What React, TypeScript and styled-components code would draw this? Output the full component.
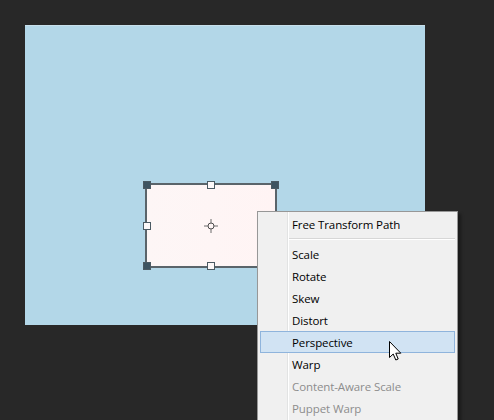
import React, { FC } from "react";
import styled, { createGlobalStyle } from "styled-components";

const GlobalStyle = createGlobalStyle`
  html, body {
    margin: 0;
    padding: 0;
    background: #282828;
  }
  body {
    width: 494px;
    height: 420px;
    overflow: hidden;
    font-family: "Open Sans", "Noto Sans", sans-serif;
  }
`;

const StyledWorkspace = styled.div`
  position: relative;
  display: flex;
  align-items: flex-start;
  width: 494px;
  height: 420px;
  padding: 25px 0 0 25px;
  box-sizing: border-box;
  background: #282828;
`;

const StyledCanvas = styled.div`
  position: relative;
  width: 400px;
  height: 300px;
  background: #b3d7e8;
  border-top: 1px solid #c8e0eb;
  box-sizing: border-box;
`;

const StyledShape = styled.div`
  position: absolute;
  left: 120px;
  top: 157px;
  width: 132px;
  height: 85px;
  box-sizing: border-box;
  border: 2px solid #5a646a;
  background: linear-gradient(90deg, #fdf6f6, #fff4f4);
`;

const StyledHandle = styled.span<{ $x: number; $y: number; $filled?: boolean }>`
  position: absolute;
  left: ${({ $x }) => $x}%;
  top: ${({ $y }) => $y}%;
  width: 8px;
  height: 8px;
  margin: -4px 0 0 -4px;
  box-sizing: border-box;
  border: 1px solid #4b5a63;
  background: ${({ $filled }) => ($filled ? "#3e5461" : "#fdf8f8")};
`;

const StyledCenter = styled.svg`
  position: absolute;
  left: 50%;
  top: 50%;
  margin: -8px 0 0 -8px;
`;

const StyledMenu = styled.ul`
  position: absolute;
  left: 257px;
  top: 211px;
  display: flex;
  flex-direction: column;
  width: 201px;
  height: 220px;
  margin: 0;
  padding: 1px 2px 0 2px;
  list-style: none;
  box-sizing: border-box;
  background: #f0f0f0;
  border: 1px solid #979797;
  box-shadow: 3px 3px 3px rgba(0, 0, 0, 0.35);

  &::before {
    content: "";
    position: absolute;
    left: 29px;
    top: 0;
    bottom: 0;
    width: 1px;
    background: #e2e3e3;
    border-right: 1px solid #ffffff;
  }
`;

const StyledItem = styled.li<{ $active?: boolean; $disabled?: boolean }>`
  position: relative;
  display: flex;
  align-items: center;
  flex: 0 0 22px;
  padding-left: 31px;
  box-sizing: border-box;
  font-size: 11.5px;
  letter-spacing: -0.1px;
  color: ${({ $disabled }) => ($disabled ? "#8d8d8d" : "#000000")};
  background: ${({ $active }) => ($active ? "#d1e3f3" : "transparent")};
  border: 1px solid ${({ $active }) => ($active ? "#8fb4dc" : "transparent")};
  white-space: nowrap;
`;

const StyledSeparator = styled.li`
  position: relative;
  display: flex;
  align-items: center;
  flex: 0 0 8px;
  margin-left: 29px;

  &::after {
    content: "";
    flex: 1;
    height: 1px;
    background: #d7d7d7;
    border-bottom: 1px solid #ffffff;
  }
`;

const StyledCursor = styled.svg`
  position: absolute;
  left: 389px;
  top: 341px;
`;

const handles = [
  { x: 0, y: 0, filled: true },
  { x: 50, y: 0 },
  { x: 100, y: 0, filled: true },
  { x: 0, y: 50 },
  { x: 0, y: 100, filled: true },
  { x: 50, y: 100 },
  { x: 100, y: 100, filled: true },
];

const items: { label: string; active?: boolean; disabled?: boolean }[] = [
  { label: "Scale" },
  { label: "Rotate" },
  { label: "Skew" },
  { label: "Distort" },
  { label: "Perspective", active: true },
  { label: "Warp" },
  { label: "Content-Aware Scale", disabled: true },
  { label: "Puppet Warp", disabled: true },
];

const App: FC = () => (
  <>
    <GlobalStyle />
    <StyledWorkspace>
      <StyledCanvas>
        <StyledShape>
          {handles.map((h, i) => (
            <StyledHandle key={i} $x={h.x} $y={h.y} $filled={h.filled} />
          ))}
          <StyledCenter width="16" height="16" viewBox="0 0 16 16">
            <circle cx="8" cy="8" r="3" fill="none" stroke="#4a4a4a" strokeWidth="1" />
            <path d="M8 1v4M8 11v4M1 8h4M11 8h4" stroke="#6a6a6a" strokeWidth="1" />
          </StyledCenter>
        </StyledShape>
      </StyledCanvas>

      <StyledMenu>
        <StyledItem>Free Transform Path</StyledItem>
        <StyledSeparator />
        {items.map((it) => (
          <StyledItem key={it.label} $active={it.active} $disabled={it.disabled}>
            {it.label}
          </StyledItem>
        ))}
      </StyledMenu>

      <StyledCursor width="14" height="21" viewBox="0 0 14 21">
        <path
          d="M0.5 0.5 L0.5 16.5 L4.2 13 L6.8 19 L9.2 18 L6.8 12.2 L11.8 12.2 Z"
          fill="#ffffff"
          stroke="#000000"
          strokeWidth="1"
          strokeLinejoin="miter"
        />
      </StyledCursor>
    </StyledWorkspace>
  </>
);

export default App;
